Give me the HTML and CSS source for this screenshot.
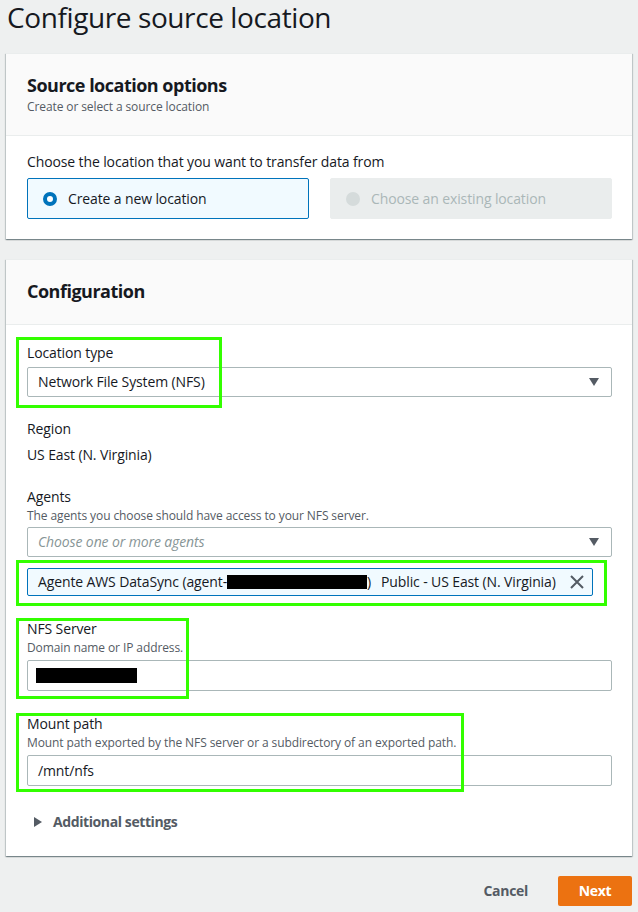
FILE: index.html
```html
<!DOCTYPE html>
<html lang="en">
<head>
<meta charset="utf-8">
<title>Configure source location</title>
<link rel="stylesheet" href="styles.css">
</head>
<body>
<div class="page">
  <h1 class="page-title">Configure source location</h1>

  <section class="card">
    <header class="card-head">
      <h2 class="card-title">Source location options</h2>
      <p class="card-sub">Create or select a source location</p>
    </header>
    <div class="card-body">
      <div class="field-label">Choose the location that you want to transfer data from</div>
      <div class="tiles">
        <div class="tile tile-selected">
          <span class="radio radio-on"></span>
          <span>Create a new location</span>
        </div>
        <div class="tile tile-disabled">
          <span class="radio radio-off"></span>
          <span>Choose an existing location</span>
        </div>
      </div>
    </div>
  </section>

  <section class="card card-config">
    <header class="card-head card-head-config">
      <h2 class="card-title">Configuration</h2>
    </header>
    <div class="card-body config-body">
      <div class="hl hl-1"></div>
      <div class="hl hl-2"></div>
      <div class="hl hl-3"></div>
      <div class="hl hl-4"></div>

      <div class="field">
        <div class="field-label">Location type</div>
        <div class="select">
          <span>Network File System (NFS)</span>
          <span class="caret"></span>
        </div>
      </div>

      <div class="field">
        <div class="field-label">Region</div>
        <div class="field-value">US East (N. Virginia)</div>
      </div>

      <div class="field">
        <div class="field-label">Agents</div>
        <div class="field-desc">The agents you choose should have access to your NFS server.</div>
        <div class="select">
          <span class="placeholder">Choose one or more agents</span>
          <span class="caret"></span>
        </div>
        <div class="chip">
          <span class="chip-text">Agente AWS DataSync (agent-<span class="redact redact-agent"></span>)</span>
          <span class="chip-text chip-region">Public - US East (N. Virginia)</span>
          <svg class="chip-x" width="14" height="14" viewBox="0 0 14 14" aria-hidden="true">
            <path d="M1 1 L13 13 M13 1 L1 13" stroke="#545b64" stroke-width="2" fill="none"/>
          </svg>
        </div>
      </div>

      <div class="field field-wide">
        <div class="field-label">NFS Server</div>
        <div class="field-desc">Domain name or IP address.</div>
        <div class="input"><span class="redact redact-server"></span></div>
      </div>

      <div class="field field-wide">
        <div class="field-label">Mount path</div>
        <div class="field-desc">Mount path exported by the NFS server or a subdirectory of an exported path.</div>
        <div class="input">/mnt/nfs</div>
      </div>

      <div class="expander">
        <span class="expander-caret"></span>
        <span>Additional settings</span>
      </div>
    </div>
  </section>

  <div class="actions">
    <button class="btn-link">Cancel</button>
    <button class="btn-primary">Next</button>
  </div>
</div>
</body>
</html>
```

FILE: styles.css
```css
* { box-sizing: border-box; }

body {
  margin: 0;
  background: #eef0f0;
  font-family: "Open Sans", "Noto Sans", sans-serif;
  color: #16191f;
  font-size: 14px;
  line-height: 20px;
  letter-spacing: -0.12px;
}

.page {
  padding: 0 6px 6px 6px;
}

.page-title {
  margin: 0;
  padding: 2px 0 0 1px;
  font-size: 28px;
  line-height: 30px;
  font-weight: 400;
  letter-spacing: -0.4px;
  color: #16191f;
}

.card {
  margin-top: 21px;
  background: #fff;
  box-shadow: 0 1px 1px 0 rgba(0, 28, 36, 0.3), 1px 1px 1px 0 rgba(0, 28, 36, 0.15), -1px 1px 1px 0 rgba(0, 28, 36, 0.15);
  border-top: 1px solid #eaeded;
}

.card-config {
  margin-top: 20px;
}

.card-head {
  background: #fafafa;
  border-bottom: 1px solid #eaeded;
  padding: 20px 20px 20px 21px;
}

.card-head-config {
  padding: 20px 20px 22px 21px;
}

.card-title {
  margin: 0;
  font-size: 18px;
  line-height: 22px;
  font-weight: 700;
  letter-spacing: -0.5px;
}

.card-sub {
  margin: 3px 0 0 0;
  font-size: 12px;
  line-height: 16px;
  color: #545b64;
  letter-spacing: -0.1px;
}

.card-body {
  padding: 16px 20px 20px 21px;
}

.tiles {
  margin-top: 6px;
  display: grid;
  grid-template-columns: 1fr 1fr;
  gap: 21px;
}

.tile {
  height: 41px;
  display: flex;
  align-items: center;
  gap: 11px;
  padding-left: 15px;
  border-radius: 2px;
}

.tile-selected {
  background: #f1faff;
  border: 1px solid #0073bb;
  color: #16191f;
}

.tile-disabled {
  background: #eaeded;
  border: 1px solid #eaeded;
  color: #aab7b8;
}

.radio {
  width: 14px;
  height: 14px;
  border-radius: 50%;
  flex: none;
}

.radio-on {
  background: #fff;
  border: 4px solid #0073bb;
}

.radio-off {
  background: #d5dbdb;
}

.config-body {
  position: relative;
  padding: 18px 20px 24px 21px;
}

.field + .field {
  margin-top: 22px;
}

.field + .field-wide {
  margin-top: 23px;
}

.field-label {
  font-size: 14px;
  line-height: 20px;
}

.field-value {
  margin-top: 6px;
}

.field-desc {
  font-size: 12px;
  line-height: 16px;
  color: #545b64;
  margin-top: 1px;
  letter-spacing: -0.1px;
}

.select,
.input {
  height: 30px;
  border: 1px solid #aab7b8;
  border-radius: 2px;
  background: #fff;
  display: flex;
  align-items: center;
  padding: 0 12px 0 10px;
  margin-top: 4px;
}

.input {
  height: 31px;
}

.field-desc + .select {
  margin-top: 3px;
}

.field-desc + .input {
  margin-top: 4px;
}

.select {
  justify-content: space-between;
}

.placeholder {
  color: #879596;
  font-style: italic;
}

.caret {
  width: 0;
  height: 0;
  border-left: 5px solid transparent;
  border-right: 5px solid transparent;
  border-top: 8px solid #545b64;
}

.chip {
  margin-top: 11px;
  width: 566px;
  height: 28px;
  background: #f1faff;
  border: 1px solid #0073bb;
  border-radius: 2px;
  display: flex;
  align-items: center;
  padding: 0 8px 0 10px;
}

.chip-text {
  white-space: nowrap;
}

.chip-region {
  margin-left: 10px;
}

.chip-x {
  margin-left: auto;
}

.redact {
  display: inline-block;
  background: #000;
  vertical-align: middle;
}

.redact-agent {
  width: 140px;
  height: 14px;
  margin-top: -2px;
}

.redact-server {
  width: 101px;
  height: 15px;
  margin-left: -2px;
}

.expander {
  margin-top: 26px;
  display: flex;
  align-items: center;
  gap: 11px;
  padding-left: 7px;
  font-weight: 700;
  color: #545b64;
  letter-spacing: -0.4px;
}

.expander-caret {
  width: 0;
  height: 0;
  border-top: 5px solid transparent;
  border-bottom: 5px solid transparent;
  border-left: 8px solid #545b64;
}

.actions {
  display: flex;
  justify-content: flex-end;
  align-items: center;
  gap: 30px;
  margin-top: 20px;
}

.btn-link {
  background: none;
  border: none;
  font: inherit;
  font-weight: 700;
  letter-spacing: -0.3px;
  color: #545b64;
  padding: 0;
}

.btn-primary {
  background: #ec7211;
  border: none;
  border-radius: 2px;
  color: #fff;
  font: inherit;
  font-weight: 700;
  letter-spacing: -0.3px;
  height: 30px;
  width: 74px;
}

.hl {
  position: absolute;
  border: 3px solid #33ff00;
  pointer-events: none;
}

.hl-1 { left: 10px; top: 12px; width: 206px; height: 71px; }
.hl-2 { left: 10px; top: 235px; width: 591px; height: 46px; }
.hl-3 { left: 10px; top: 293px; width: 173px; height: 81px; }
.hl-4 { left: 10px; top: 388px; width: 448px; height: 79px; }
```
